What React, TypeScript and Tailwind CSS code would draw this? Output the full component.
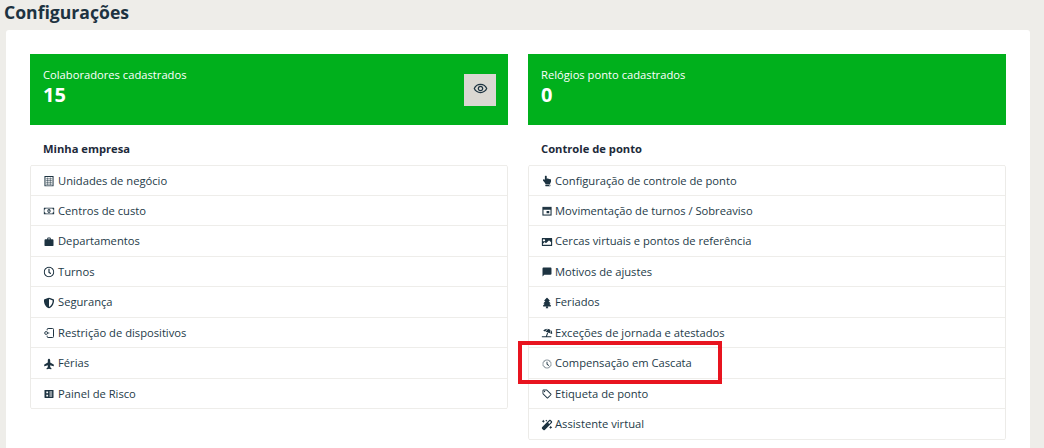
import type { IconType } from 'react-icons';
import {
  FaRegMoneyBillAlt,
  FaRegClock,
  FaShieldAlt,
  FaPlane,
  FaHandPointUp,
  FaImage,
  FaTree,
  FaUmbrellaBeach,
  FaMagic,
} from 'react-icons/fa';
import {
  MdWork,
  MdChatBubble,
  MdOutlineHistoryToggleOff,
  MdOutlineLocalOffer,
  MdOutlineRemoveRedEye,
} from 'react-icons/md';

type IconProps = { size?: number; className?: string };
type Item = { label: string; icon: IconType | ((p: IconProps) => React.ReactElement) };

function BuildingIcon({ size, className }: IconProps) {
  return (
    <svg width={size} height={size} viewBox="0 0 12 12" className={className} fill="none" stroke="currentColor">
      <rect x="1.5" y="1" width="9" height="10.5" strokeWidth="1.1" />
      <path d="M2.5 3.5h7M2.5 5.5h7M2.5 7.5h7M2.5 9.5h7M4.5 2v8.5M7.5 2v8.5" strokeWidth="0.8" opacity="0.7" />
    </svg>
  );
}

function DeviceIcon({ size, className }: IconProps) {
  return (
    <svg width={size} height={size} viewBox="0 0 12 12" className={className} fill="none" stroke="currentColor">
      <path d="M4 3V2a1 1 0 0 1 1-1h5a1 1 0 0 1 1 1v8a1 1 0 0 1-1 1H5a1 1 0 0 1-1-1V9" strokeWidth="1.1" />
      <circle cx="2.8" cy="6" r="1.6" strokeWidth="1" />
      <path d="M4.4 6h2" strokeWidth="1" />
    </svg>
  );
}

function CalendarIcon({ size, className }: IconProps) {
  return (
    <svg width={size} height={size} viewBox="0 0 12 12" className={className} fill="none" stroke="currentColor">
      <rect x="1.5" y="2" width="9" height="8.5" strokeWidth="1.2" />
      <path d="M1.5 3.5h9" strokeWidth="2" />
      <rect x="5.5" y="6" width="3" height="2.5" fill="currentColor" stroke="none" />
    </svg>
  );
}

function PanelIcon({ size, className }: IconProps) {
  return (
    <svg width={size} height={size} viewBox="0 0 12 12" className={className}>
      <rect x="1" y="1.5" width="10" height="9" rx="0.5" fill="currentColor" />
      <path d="M3 3.2h2v2H3zM3 6.8h2v2H3zM6.5 3.2h3v1H6.5zM6.5 5.5h3v1H6.5zM6.5 7.8h3v1H6.5z" fill="#fff" />
    </svg>
  );
}

const empresa: Item[] = [
  { label: 'Unidades de negócio', icon: BuildingIcon },
  { label: 'Centros de custo', icon: FaRegMoneyBillAlt },
  { label: 'Departamentos', icon: MdWork },
  { label: 'Turnos', icon: FaRegClock },
  { label: 'Segurança', icon: FaShieldAlt },
  { label: 'Restrição de dispositivos', icon: DeviceIcon },
  { label: 'Férias', icon: FaPlane },
  { label: 'Painel de Risco', icon: PanelIcon },
];

const ponto: Item[] = [
  { label: 'Configuração de controle de ponto', icon: FaHandPointUp },
  { label: 'Movimentação de turnos / Sobreaviso', icon: CalendarIcon },
  { label: 'Cercas virtuais e pontos de referência', icon: FaImage },
  { label: 'Motivos de ajustes', icon: MdChatBubble },
  { label: 'Feriados', icon: FaTree },
  { label: 'Exceções de jornada e atestados', icon: FaUmbrellaBeach },
  { label: 'Compensação em Cascata', icon: MdOutlineHistoryToggleOff },
  { label: 'Etiqueta de ponto', icon: MdOutlineLocalOffer },
  { label: 'Assistente virtual', icon: FaMagic },
];

function Column({ stat, value, title, items, eye, gap }: { stat: string; value: string; title: string; items: Item[]; eye?: boolean; gap: string }) {
  return (
    <div className="w-[478px]">
      <div className="h-[71px] bg-[#00b01c] pl-[13px] pr-3 flex items-center justify-between text-white">
        <div>
          <div className="text-[11.2px] leading-[15px] mt-[-4px]">{stat}</div>
          <div className="text-[20px] leading-[26px] font-bold">{value}</div>
        </div>
        {eye && (
          <div className="w-8 h-8 bg-[#dbd8d2] flex items-center justify-center text-[#1d3341]">
            <MdOutlineRemoveRedEye size={15} className="mb-[3px]" />
          </div>
        )}
      </div>
      <h2 className="pl-[13px] mt-4 h-6 text-[11.2px] leading-4 font-bold text-[#1d2a3a]">{title}</h2>
      <ul className="border-x border-[#ecebe8] rounded-[3px]">
        {items.map(({ label, icon: Icon }) => (
          <li key={label} className={`${gap} h-[30.5px] pl-3 pt-[2px] flex items-center border-b border-[#eeedea] first:border-t text-[11.2px] text-[#243a48]`}>
            <Icon size={12} className={label === 'Férias' ? 'text-[#1d3341] shrink-0 scale-90 -rotate-90' : 'text-[#1d3341] shrink-0 scale-90'} />
            <span>{label}</span>
          </li>
        ))}
      </ul>
    </div>
  );
}

export default function App() {
  return (
    <div className="relative h-[448px] overflow-hidden bg-[#eeede9] font-['Open_Sans',sans-serif]">
      <h1 className="pl-1 h-[30px] text-[17.6px] leading-[25px] font-bold text-[#1d3341]">Configurações</h1>
      <div className="ml-[6px] w-[1024px] h-[418px] bg-white rounded-t-[3px] pt-6 pl-6 flex gap-5">
        <Column stat="Colaboradores cadastrados" value="15" title="Minha empresa" items={empresa} eye gap="gap-[3px]" />
        <Column stat="Relógios ponto cadastrados" value="0" title="Controle de ponto" items={ponto} gap="gap-[2px]" />
      </div>
      <div className="absolute left-[518px] top-[341px] w-[204px] h-[43px] border-[4px] border-[#e8141f]" />
    </div>
  );
}
